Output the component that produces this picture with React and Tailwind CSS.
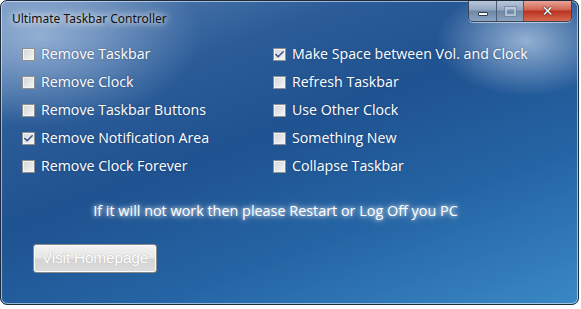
import { Check } from 'lucide-react';

const leftItems = [
  { label: 'Remove Taskbar', checked: false },
  { label: 'Remove Clock', checked: false },
  { label: 'Remove Taskbar Buttons', checked: false },
  { label: 'Remove Notification Area', checked: true },
  { label: 'Remove Clock Forever', checked: false },
];

const rightItems = [
  { label: 'Make Space between Vol. and Clock', checked: true },
  { label: 'Refresh Taskbar', checked: false },
  { label: 'Use Other Clock', checked: false },
  { label: 'Something New', checked: false },
  { label: 'Collapse Taskbar', checked: false },
];

function CheckBox({ label, checked }) {
  return (
    <label className="flex items-center h-[28px] gap-[6px] text-[14.2px] text-white [text-shadow:0_0_2px_rgba(20,40,80,0.5)]">
      <span className="w-[13px] h-[13px] flex items-center justify-center border border-[#8e8f8f] bg-[linear-gradient(135deg,#d2d4d6,#f6f6f6)] shadow-[inset_0_0_0_1px_#f4f4f4]">
        {checked && <Check className="w-[11px] h-[11px] text-[#3d4f93]" strokeWidth={3.5} />}
      </span>
      <span>{label}</span>
    </label>
  );
}

function CaptionButtons() {
  return (
    <div className="flex h-[21px] border border-t-0 border-[#3a4657] rounded-b-[5px] overflow-hidden shadow-[0_1px_0_rgba(255,255,255,0.5)]">
      <div className="w-[28px] flex items-center justify-center border-r border-[#4a5a70] bg-[linear-gradient(to_bottom,#b8c6d8,#93a7c0_45%,#6e87a6_50%,#8aa3c2)]">
        <span className="w-[10px] h-[4px] mt-[5px] bg-white border border-[#2c3a4c] rounded-[1px]" />
      </div>
      <div className="w-[27px] flex items-center justify-center border-r border-[#4a5a70] bg-[linear-gradient(to_bottom,#b8c6d8,#93a7c0_45%,#6e87a6_50%,#8aa3c2)]">
        <span className="w-[11px] h-[9px] border-2 border-[#c7d3e2] outline outline-1 outline-[#6d8098] opacity-70" />
      </div>
      <div className="w-[47px] flex items-center justify-center bg-[linear-gradient(to_bottom,#e8a497,#d0634f_45%,#b8321f_50%,#d86a4e)]">
        <span className="text-white font-bold text-[14px] leading-none [font-family:'DejaVu_Sans',sans-serif] [text-shadow:0_0_1px_#3a1a14,0_0_1px_#3a1a14,0_0_1px_#3a1a14]">✕</span>
      </div>
    </div>
  );
}

export default function App() {
  return (
    <div className="w-[581px] h-[309px] bg-white [font-family:'Open_Sans','Noto_Sans',sans-serif]">
      <div className="w-[579px] h-[305px] flex flex-col rounded-[7px] border border-[#1d2a39] overflow-hidden shadow-[inset_0_0_0_1px_rgba(230,240,255,0.6)] bg-[radial-gradient(ellipse_90px_55px_at_525px_40px,rgba(225,238,255,0.6),transparent),radial-gradient(ellipse_160px_90px_at_40px_35px,rgba(205,222,245,0.55),transparent),linear-gradient(160deg,#5c82b2_0%,#2b5c98_25%,#1f5290_45%,#2565a5_70%,#3a88c4_100%)]">
        {/* Title bar */}
        <div className="flex justify-between h-[31px] pr-[6px]">
          <div className="pl-[11px] pt-[9px] text-[12px] text-[#111] [font-family:'Noto_Sans',sans-serif] [text-shadow:0_0_6px_rgba(255,255,255,0.95),0_0_10px_rgba(255,255,255,0.8)]">
            Ultimate Taskbar Controller
          </div>
          <CaptionButtons />
        </div>

        {/* Options */}
        <div className="flex pl-[21px] pt-[8px]">
          <div className="w-[251px] flex flex-col">
            {leftItems.map((item) => (
              <CheckBox key={item.label} {...item} />
            ))}
          </div>
          <div className="flex flex-col">
            {rightItems.map((item) => (
              <CheckBox key={item.label} {...item} />
            ))}
          </div>
        </div>

        <p className="mt-[20px] text-center pr-[28px] text-[14.4px] text-white [text-shadow:0_0_4px_rgba(255,255,255,0.9),0_0_8px_rgba(255,255,255,0.6)]">
          If it will not work then please Restart or Log Off you PC
        </p>

        <div className="flex pl-[32px] mt-[22px]">
          <button className="w-[124px] h-[29px] border border-[#8a8a8a] rounded-[3px] bg-[linear-gradient(to_bottom,#f2f2f2,#e6e6e6_48%,#d4d4d4_52%,#dcdcdc)] text-white text-[15.5px] tracking-[-0.2px] [font-family:'Liberation_Sans',sans-serif] [text-shadow:0_0_1px_#b8b8b8,0_0_1px_#b8b8b8] shadow-[inset_0_0_0_1px_#fbfbfb]">
            Visit Homepage
          </button>
        </div>
      </div>
    </div>
  );
}
